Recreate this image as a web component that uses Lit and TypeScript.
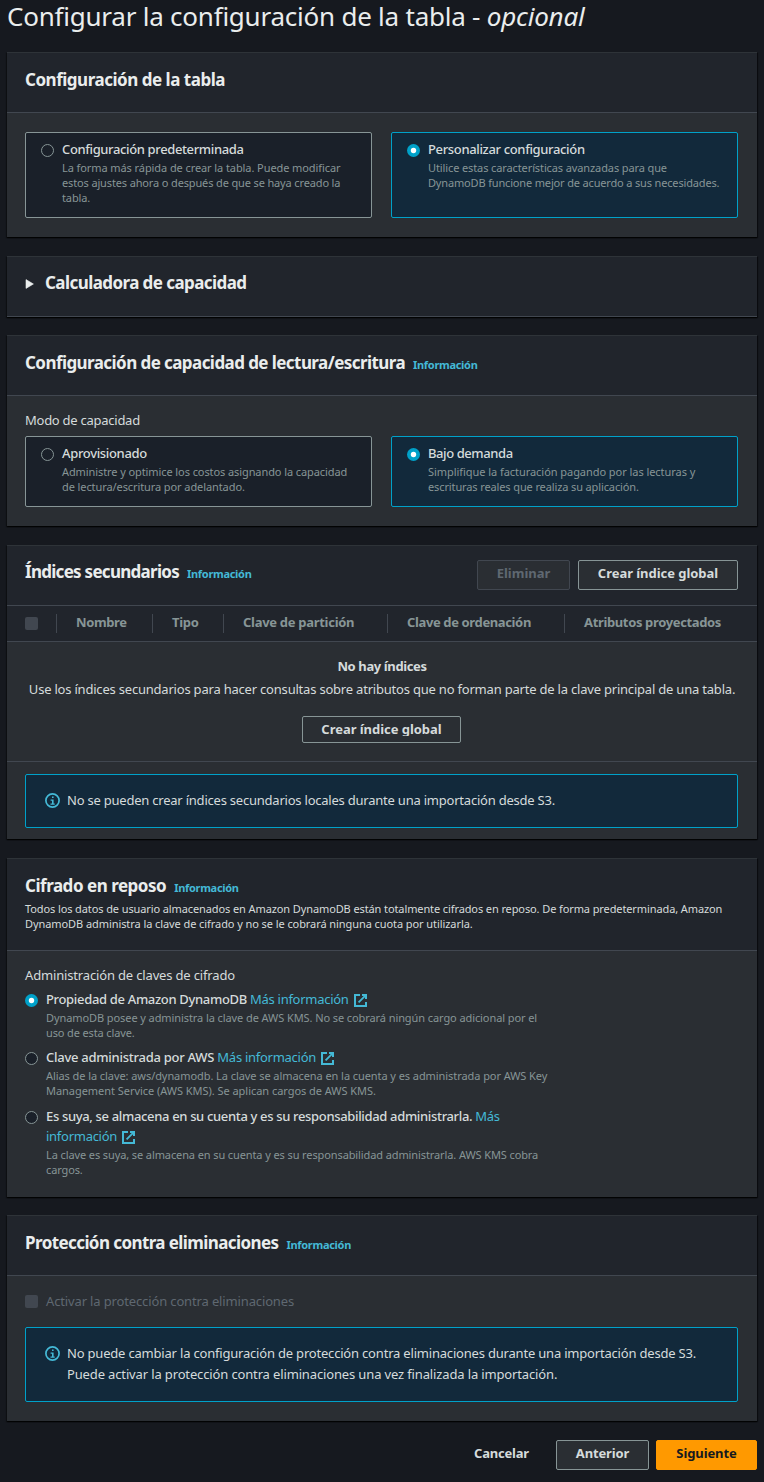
import { LitElement, html, css, svg, nothing, TemplateResult } from "lit";
import { customElement, property } from "lit/decorators.js";

const base = css`
  :host { display: block; font-family: "Noto Sans", "Open Sans", sans-serif; font-size: 13px; line-height: 20px; color: #d5dbdb; }
  * { box-sizing: border-box; }
  .t { display: block; white-space: nowrap; }
`;

/** One line of text with its own tracking. */
const line = (text: string, tracking: number) =>
  html`<span class="t" style="letter-spacing:${tracking}px">${text}</span>`;

const dot = (on: boolean) => svg`<svg class="radio" width="13" height="13" viewBox="0 0 13 13">
  ${on
    ? svg`<circle cx="6.5" cy="6.5" r="6.5" fill="#00a1c9"/><circle cx="6.5" cy="6.5" r="2.7" fill="#fff"/>`
    : svg`<circle cx="6.5" cy="6.5" r="6" fill="#1a2029" stroke="#879596"/>`}
</svg>`;

@customElement("ui-panel")
class UiPanel extends LitElement {
  @property() heading = "";
  @property({ type: Number }) tracking = -0.57;
  @property({ type: Boolean }) info = false;
  @property({ type: Boolean }) collapsed = false;
  @property({ type: Boolean }) raised = false;

  static styles = [base, css`
    .panel { background: #2a2e33; border-top: 1px solid #2e3338; box-shadow: 0 1px 1px 0 rgba(0, 0, 0, 0.65), 1px 1px 1px rgba(0, 0, 0, 0.45), -1px 1px 1px rgba(0, 0, 0, 0.3); }
    header { display: flex; justify-content: space-between; align-items: flex-start; min-height: 60px; padding: 16px 19px 19px 18px; background: #21252c; border-bottom: 1px solid #414750; }
    header.raised { padding-top: 14px; padding-bottom: 0; }
    .head { display: flex; align-items: baseline; gap: 8px; height: 22px; }
    .raised .head { margin-top: 1px; }
    h2 { margin: 0; font-size: 17px; line-height: 22px; font-weight: 700; color: #eaeded; white-space: nowrap; }
    .info { font-size: 11px; font-weight: 700; color: #44b9d6; letter-spacing: -0.3px; }
    .caret { align-self: center; margin: 2px 3px 0 0; }
  `];

  render() {
    return html`<section class="panel">
      <header class=${this.raised ? "raised" : ""}>
        <div>
          <div class="head">
            ${this.collapsed
              ? html`<svg class="caret" width="9" height="10" viewBox="0 0 9 10"><path d="M1 0.6v8.8l7.4-4.4z" fill="#eaeded" stroke="#eaeded" stroke-width=".6"/></svg>`
              : nothing}
            <h2 style="letter-spacing:${this.tracking}px">${this.heading}</h2>
            ${this.info ? html`<span class="info">Información</span>` : nothing}
          </div>
          <slot name="description"></slot>
        </div>
        <slot name="actions"></slot>
      </header>
      <slot></slot>
    </section>`;
  }
}

@customElement("ui-button")
class UiButton extends LitElement {
  @property() kind = "normal";
  @property() label = "";
  @property({ type: Number }) tracking = 0;
  @property({ type: Number }) width = 100;

  static styles = [base, css`
    button { display: flex; justify-content: center; width: 100%; height: 30px; padding: 2px 0 0; border: 1px solid #879596; border-radius: 2px; background: #2a2e33; color: #d5dbdb; font: 700 13px/20px "Noto Sans", sans-serif; }
    button.disabled { border-color: #414750; color: #5f6871; }
    button.primary { border-color: #ff9900; background: #ff9900; color: #16191f; }
    button.link { border-color: transparent; background: transparent; }
    button.compact { height: 27px; }
    .compact .t { height: 17px; overflow: hidden; }
  `];

  render() {
    return html`<div style="width:${this.width}px"><button class=${this.kind}>${line(this.label, this.tracking)}</button></div>`;
  }
}

@customElement("ui-tile")
class UiTile extends LitElement {
  @property({ type: Boolean }) checked = false;
  @property({ attribute: false }) label: [string, number] = ["", 0];
  @property({ attribute: false }) lines: [string, number][] = [];

  static styles = [base, css`
    :host { display: flex; }
    .tile { display: flex; flex: 1; gap: 8px; padding: 6px 15px 12px; background: #1a2029; border: 1px solid #879596; border-radius: 2px; }
    .tile.checked { background: #12293b; border-color: #00a1c9; }
    .radio { flex: none; margin-top: 5px; }
    .label { font-weight: 500; }
    .sub { margin-top: 1px; font-size: 11px; line-height: 15px; color: #879596; }
  `];

  render() {
    return html`<div class="tile ${this.checked ? "checked" : ""}">
      ${dot(this.checked)}
      <div>
        <div class="label">${line(...this.label)}</div>
        <div class="sub">${this.lines.map((l) => line(...l))}</div>
      </div>
    </div>`;
  }
}

@customElement("ui-alert")
class UiAlert extends LitElement {
  @property({ attribute: false }) lines: [string, number][] = [];

  static styles = [base, css`
    .alert { display: flex; gap: 7px; padding: 15px 19px 16px; background: #12293b; border: 1px solid #00a1c9; border-radius: 2px; line-height: 21px; }
    svg { flex: none; margin-top: 3px; }
  `];

  render() {
    return html`<div class="alert">
      <svg width="15" height="15" viewBox="0 0 15 15" fill="none" stroke="#44b9d6">
        <circle cx="7.5" cy="7.5" r="6.6" stroke-width="1.7"/>
        <path d="M7 3.6h1.6v1.5H7z" fill="#44b9d6" stroke="none"/>
        <path d="M5.6 6.5h3v4h1.1v1.2H5.5v-1.2H7V7.7H5.6z" fill="#44b9d6" stroke="none"/>
      </svg>
      <div>${this.lines.map((l) => line(...l))}</div>
    </div>`;
  }
}

const external = html`<svg class="ext" width="15" height="15" viewBox="0 0 15 15" fill="none" stroke="#44b9d6" stroke-width="2">
  <path d="M7 2H2v11h11V9"/><path d="M9 2h4v4"/><path d="M5.6 9.4L12.6 2.4" stroke-width="1.8"/>
</svg>`;

interface KeyOption { checked: boolean; tracking: number; label: TemplateResult; lines: [string, number][]; }

const link = (text: string, tracking = -0.27) => html`<a class="link" style="letter-spacing:${tracking}px">${text}</a>`;

const keyOptions: KeyOption[] = [
  {
    checked: true,
    tracking: -0.33,
    label: html`Propiedad de Amazon DynamoDB ${link("Más información")}${external}`,
    lines: [["DynamoDB posee y administra la clave de AWS KMS. No se cobrará ningún cargo adicional por el", -0.085], ["uso de esta clave.", -0.13]],
  },
  {
    checked: false,
    tracking: -0.26,
    label: html`Clave administrada por AWS ${link("Más información")}${external}`,
    lines: [["Alias de la clave: aws/dynamodb. La clave se almacena en la cuenta y es administrada por AWS Key", -0.07], ["Management Service (AWS KMS). Se aplican cargos de AWS KMS.", -0.04]],
  },
  {
    checked: false,
    tracking: -0.34,
    label: html`Es suya, se almacena en su cuenta y es su responsabilidad administrarla. ${link("Más")}<br />${link("información")}${external}`,
    lines: [["La clave es suya, se almacena en su cuenta y es su responsabilidad administrarla. AWS KMS cobra", -0.105], ["cargos.", -0.13]],
  },
];

const columns: [string, number][] = [
  ["Nombre", -0.4], ["Tipo", -0.3], ["Clave de partición", -0.29], ["Clave de ordenación", -0.37], ["Atributos proyectados", -0.357],
];

@customElement("app-root")
class AppRoot extends LitElement {
  static styles = [base, css`
    :host { min-height: 1482px; background: #16191f; }
    main { display: flex; flex-direction: column; padding: 0 7px; }
    h1 { margin: 0 0 20px; font-size: 26px; line-height: 32px; font-weight: 400; letter-spacing: -0.23px; color: #eaeded; white-space: nowrap; }
    em { letter-spacing: -0.2px; }
    .gap { margin-top: 19px; }
    .gap-s { margin-top: 18px; }
    .body { padding: 19px 19px 19px 18px; }
    .body.form { padding-top: 14px; }
    .tiles { display: grid; grid-template-columns: 347px 347px; gap: 19px; }
    .form .tiles { margin-top: 6px; }
    .actions { display: flex; gap: 8px; }
    .columns { display: grid; grid-template-columns: 49px 96px 71px 164px 177px 1fr; align-items: center; height: 36px; background: #21252c; border-bottom: 1px solid #414750; color: #879596; font-weight: 700; }
    .box { width: 13px; height: 13px; border-radius: 2px; background: #414750; }
    .columns .box { margin-left: 18px; }
    .col { height: 19px; padding-left: 19px; border-left: 1px solid #414750; line-height: 16px; }
    .empty { display: flex; flex-direction: column; align-items: center; height: 120px; padding-top: 14px; border-bottom: 1px solid #414750; }
    .empty .strong { font-weight: 700; margin-bottom: 3px; }
    .empty ui-button { margin-top: 17px; margin-right: 1px; }
    .notice { padding: 12px 19px 11px 18px; }
    .desc { margin-top: 4px; font-size: 11px; line-height: 15px; }
    .option { display: flex; gap: 8px; margin-top: 7.8px; }
    .option.first { margin-top: 4px; }
    .radio { flex: none; margin-top: 5px; }
    .label { font-weight: 500; white-space: nowrap; }
    .link { font-weight: 400; color: #44b9d6; }
    .ext { margin-left: 4px; vertical-align: -4px; }
    .sub { margin-top: 0.7px; font-size: 11px; line-height: 15px; color: #879596; }
    .body.last { padding-bottom: 20.3px; }
    .check { display: flex; align-items: center; gap: 8px; margin-bottom: 16px; color: #5f6871; }
    .body.protect { padding-top: 15px; }
    .check .box { margin-top: 2px; }
    footer { display: flex; justify-content: flex-end; margin-top: 19px; }
    footer .next { margin-left: 7px; }
  `];

  render() {
    return html`<main>
      <h1>Configurar la configuración de la tabla - <em>opcional</em></h1>

      <ui-panel heading="Configuración de la tabla" tracking="-0.48">
        <div class="body"><div class="tiles">
          <ui-tile .label=${["Configuración predeterminada", -0.37]} .lines=${[["La forma más rápida de crear la tabla. Puede modificar", -0.084], ["estos ajustes ahora o después de que se haya creado la", -0.14], ["tabla.", -0.13]]}></ui-tile>
          <ui-tile checked .label=${["Personalizar configuración", -0.35]} .lines=${[["Utilice estas características avanzadas para que", -0.11], ["DynamoDB funcione mejor de acuerdo a sus necesidades.", -0.16]]}></ui-tile>
        </div></div>
      </ui-panel>

      <ui-panel class="gap" heading="Calculadora de capacidad" tracking="-0.57" collapsed raised></ui-panel>

      <ui-panel class="gap-s" heading="Configuración de capacidad de lectura/escritura" tracking="-0.57" info>
        <div class="body form">
          ${line("Modo de capacidad", -0.26)}
          <div class="tiles">
            <ui-tile .label=${["Aprovisionado", -0.34]} .lines=${[["Administre y optimice los costos asignando la capacidad", -0.09], ["de lectura/escritura por adelantado.", -0.09]]}></ui-tile>
            <ui-tile checked .label=${["Bajo demanda", -0.42]} .lines=${[["Simplifique la facturación pagando por las lecturas y", -0.05], ["escrituras reales que realiza su aplicación.", -0.12]]}></ui-tile>
          </div>
        </div>
      </ui-panel>

      <ui-panel class="gap" heading="Índices secundarios" tracking="-0.72" info raised>
        <div slot="actions" class="actions">
          <ui-button kind="disabled" label="Eliminar" tracking="0" width="93"></ui-button>
          <ui-button label="Crear índice global" tracking="-0.04" width="160"></ui-button>
        </div>
        <div class="columns">
          <div class="box"></div>
          ${columns.map((c) => html`<div class="col">${line(...c)}</div>`)}
        </div>
        <div class="empty">
          <div class="strong">${line("No hay índices", -0.38)}</div>
          ${line("Use los índices secundarios para hacer consultas sobre atributos que no forman parte de la clave principal de una tabla.", -0.205)}
          <ui-button kind="compact" label="Crear índice global" tracking="-0.04" width="159"></ui-button>
        </div>
        <div class="notice">
          <ui-alert .lines=${[["No se pueden crear índices secundarios locales durante una importación desde S3.", -0.222]]}></ui-alert>
        </div>
      </ui-panel>

      <ui-panel class="gap" heading="Cifrado en reposo" tracking="-0.48" info>
        <div slot="description" class="desc">
          ${line("Todos los datos de usuario almacenados en Amazon DynamoDB están totalmente cifrados en reposo. De forma predeterminada, Amazon", -0.105)}
          ${line("DynamoDB administra la clave de cifrado y no se le cobrará ninguna cuota por utilizarla.", -0.075)}
        </div>
        <div class="body form last">
          ${line("Administración de claves de cifrado", -0.16)}
          ${keyOptions.map((o, i) => html`<div class="option ${i === 0 ? "first" : ""}">
            ${dot(o.checked)}
            <div>
              <div class="label" style="letter-spacing:${o.tracking}px">${o.label}</div>
              <div class="sub">${o.lines.map((l) => line(...l))}</div>
            </div>
          </div>`)}
        </div>
      </ui-panel>

      <ui-panel class="gap-s" heading="Protección contra eliminaciones" tracking="-0.59" info>
        <div class="body form protect">
          <div class="check"><div class="box"></div>${line("Activar la protección contra eliminaciones", -0.14)}</div>
          <ui-alert .lines=${[["No puede cambiar la configuración de protección contra eliminaciones durante una importación desde S3.", -0.194], ["Puede activar la protección contra eliminaciones una vez finalizada la importación.", -0.14]]}></ui-alert>
        </div>
      </ui-panel>

      <footer>
        <ui-button kind="link" label="Cancelar" tracking="-0.2" width="109"></ui-button>
        <ui-button label="Anterior" tracking="-0.15" width="93"></ui-button>
        <ui-button class="next" kind="primary" label="Siguiente" tracking="-0.1" width="101"></ui-button>
      </footer>
    </main>`;
  }
}
